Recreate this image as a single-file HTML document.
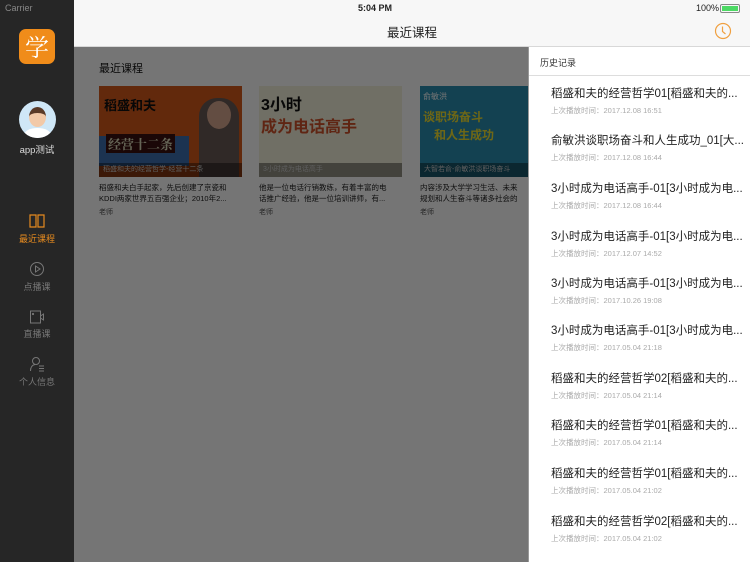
<!DOCTYPE html>
<html><head><meta charset="utf-8"><style>
*{margin:0;padding:0;box-sizing:border-box}
body{width:750px;height:562px;position:relative;overflow:hidden;font-family:"Liberation Sans","Noto Sans CJK SC",sans-serif;background:#777}
.abs{position:absolute}
#side{left:0;top:0;width:74px;height:562px;background:#262626}
#nav{left:74px;top:0;width:676px;height:47px;background:#f7f7f7;border-bottom:1px solid #d8d8d8}
#main{left:74px;top:47px;width:454px;height:515px;background:#fff}
#dim{left:74px;top:47px;width:454px;height:515px;background:rgba(0,0,0,0.54)}
#panel{left:528px;top:47px;width:222px;height:515px;background:#fff;border-left:1px solid #999}
.card{position:absolute;top:86px;width:143px}
.img{height:91px;position:relative;overflow:hidden}
.cap{position:absolute;left:0;bottom:0;width:100%;height:14px;background:rgba(0,0,0,.4);color:#ccc;font-size:7px;line-height:14px;padding-left:4px;white-space:nowrap}
.desc{font-size:7.5px;color:#222;line-height:10.5px;margin-top:6px;white-space:nowrap;overflow:hidden}
.t{font-size:7px;color:#555;margin-top:3px}
.item{position:absolute;left:22px;width:193px}
.it{font-size:11.5px;color:#222;white-space:nowrap;overflow:hidden}
.is{font-size:7.5px;color:#aaa;margin-top:4px}
.nv{position:absolute;left:0;width:74px;text-align:center;font-size:9px;color:#777}
</style></head><body>
<div id="side" class="abs">
<div class="abs" style="left:5px;top:3px;font-size:9px;color:#888">Carrier</div>
<div class="abs" style="left:19px;top:29px;width:36px;height:35px;background:#f08c1a;border-radius:7px;color:#fff;font-size:24px;text-align:center;line-height:34px;font-family:'Noto Serif CJK SC',serif">学</div>
<div class="abs" style="left:19px;top:101px;width:37px;height:37px;border-radius:50%;background:#cfe7f7;overflow:hidden"><div class="abs" style="left:10px;top:6px;width:17px;height:20px;border-radius:50%;background:#f2c9a8;border-top:6px solid #5a3a28"></div><div class="abs" style="left:5px;top:27px;width:27px;height:14px;border-radius:50% 50% 0 0;background:#fff"></div></div>
<div class="abs" style="left:0;top:142px;width:74px;text-align:center;font-size:9.5px;color:#ddd">app测试</div>
<svg class="abs" style="left:29px;top:213px" width="16" height="16" viewBox="0 0 16 16" fill="none" stroke="#e58a1f" stroke-width="1.2"><path d="M1 2h6v12H1zM9 2h6v12H9z"/></svg>
<div class="nv" style="top:232px;color:#e58a1f">最近课程</div>
<svg class="abs" style="left:29px;top:261px" width="16" height="16" viewBox="0 0 16 16" fill="none" stroke="#777" stroke-width="1"><circle cx="8" cy="8" r="6.5"/><path d="M6.5 5v6l4.5-3z"/></svg>
<div class="nv" style="top:280px">点播课</div>
<svg class="abs" style="left:29px;top:309px" width="16" height="16" viewBox="0 0 16 16" fill="none" stroke="#777" stroke-width="1"><rect x="1.5" y="2" width="10" height="12"/><path d="M11.5 7l3-2v6l-3-2"/><circle cx="4" cy="5" r=".6" fill="#777"/></svg>
<div class="nv" style="top:327px">直播课</div>
<svg class="abs" style="left:29px;top:356px" width="16" height="16" viewBox="0 0 16 16" fill="none" stroke="#777" stroke-width="1"><circle cx="7" cy="5" r="3.5"/><path d="M1.5 15c0-4 2-6 4.5-6.5M10 10h5M10 12.5h5M10 15h5"/></svg>
<div class="nv" style="top:375px">个人信息</div>
</div>
<div id="nav" class="abs">
<div class="abs" style="left:284px;top:3px;font-size:9px;font-weight:bold;color:#222">5:04 PM</div>
<div class="abs" style="left:0;top:22px;width:676px;text-align:center;font-size:12.5px;color:#222">最近课程</div>
<div class="abs" style="left:622px;top:3px;font-size:9px;color:#222">100%</div>
<div class="abs" style="left:646px;top:4px;width:20px;height:9px;border:1px solid #888;border-radius:2px;padding:1px"><div style="width:100%;height:100%;background:#4cd964"></div></div>
<svg class="abs" style="left:640px;top:22px" width="18" height="18" viewBox="0 0 18 18" fill="none" stroke="#f0a040" stroke-width="1.2"><circle cx="9" cy="9" r="7.5"/><path d="M8.5 4.5v5l3 2.5"/></svg>
</div>
<div id="main" class="abs">
<div class="abs" style="left:25px;top:13px;font-size:11px;color:#111">最近课程</div>
<div class="card" style="left:25px;top:39px"><div class="img" style="background:#d65a1c"><div class="abs" style="left:0;top:50px;width:90px;height:30px;background:#3d6fb0"></div><div class="abs" style="left:5px;top:9px;font-size:13px;font-weight:bold;color:#111">稻盛和夫</div><div class="abs" style="left:7px;top:48px;font-size:13px;font-weight:bold;color:#ddb;background:#3a1010;padding:0 2px;font-family:'Noto Serif CJK SC',serif">经营十二条</div><div class="abs" style="left:100px;top:12px;width:40px;height:80px;background:#6a5a55;border-radius:18px 18px 0 0"></div><div class="abs" style="left:108px;top:15px;width:24px;height:28px;background:#d8a890;border-radius:50%"></div><div class="cap">稻盛和夫的经营哲学-经营十二条</div></div><div class="desc">稻盛和夫白手起家，先后创建了京瓷和<br>KDDI两家世界五百强企业；2010年2...</div><div class="t">老师</div></div>
<div class="card" style="left:185px;top:39px"><div class="img" style="background:#f3f1dc"><div class="abs" style="left:2px;top:5px;font-size:16px;font-weight:bold;color:#111">3小时</div><div class="abs" style="left:2px;top:27px;font-size:16px;font-weight:bold;color:#d0522a">成为电话高手</div><div class="cap">3小时成为电话高手</div></div><div class="desc">他是一位电话行销教练，有着丰富的电<br>话推广经验，他是一位培训讲师，有...</div><div class="t">老师</div></div>
<div class="card" style="left:346px;top:39px"><div class="img" style="background:#2a8eb0"><div class="abs" style="left:3px;top:5px;font-size:8px;color:#fff">俞敏洪</div><div class="abs" style="left:3px;top:22px;font-size:12px;font-weight:bold;color:#f0e030">谈职场奋斗</div><div class="abs" style="left:14px;top:40px;font-size:12px;font-weight:bold;color:#f0e030">和人生成功</div><div class="cap">大智若俞-俞敏洪谈职场奋斗</div></div><div class="desc">内容涉及大学学习生活、未来<br>规划和人生奋斗等诸多社会的</div><div class="t">老师</div></div>
</div>
<div id="dim" class="abs"></div>
<div id="panel" class="abs">
<div class="abs" style="left:11px;top:9px;font-size:9px;color:#333">历史记录</div>
<div class="abs" style="left:0;top:28px;width:222px;height:1px;background:#ddd"></div>
<div class="item" style="top:38px"><div class="it">稻盛和夫的经营哲学01[稻盛和夫的...</div><div class="is">上次播放时间：2017.12.08 16:51</div></div>
<div class="item" style="top:85px"><div class="it">俞敏洪谈职场奋斗和人生成功_01[大...</div><div class="is">上次播放时间：2017.12.08 16:44</div></div>
<div class="item" style="top:133px"><div class="it">3小时成为电话高手-01[3小时成为电...</div><div class="is">上次播放时间：2017.12.08 16:44</div></div>
<div class="item" style="top:181px"><div class="it">3小时成为电话高手-01[3小时成为电...</div><div class="is">上次播放时间：2017.12.07 14:52</div></div>
<div class="item" style="top:228px"><div class="it">3小时成为电话高手-01[3小时成为电...</div><div class="is">上次播放时间：2017.10.26 19:08</div></div>
<div class="item" style="top:275px"><div class="it">3小时成为电话高手-01[3小时成为电...</div><div class="is">上次播放时间：2017.05.04 21:18</div></div>
<div class="item" style="top:323px"><div class="it">稻盛和夫的经营哲学02[稻盛和夫的...</div><div class="is">上次播放时间：2017.05.04 21:14</div></div>
<div class="item" style="top:370px"><div class="it">稻盛和夫的经营哲学01[稻盛和夫的...</div><div class="is">上次播放时间：2017.05.04 21:14</div></div>
<div class="item" style="top:418px"><div class="it">稻盛和夫的经营哲学01[稻盛和夫的...</div><div class="is">上次播放时间：2017.05.04 21:02</div></div>
<div class="item" style="top:466px"><div class="it">稻盛和夫的经营哲学02[稻盛和夫的...</div><div class="is">上次播放时间：2017.05.04 21:02</div></div>
</div>
</body></html>
